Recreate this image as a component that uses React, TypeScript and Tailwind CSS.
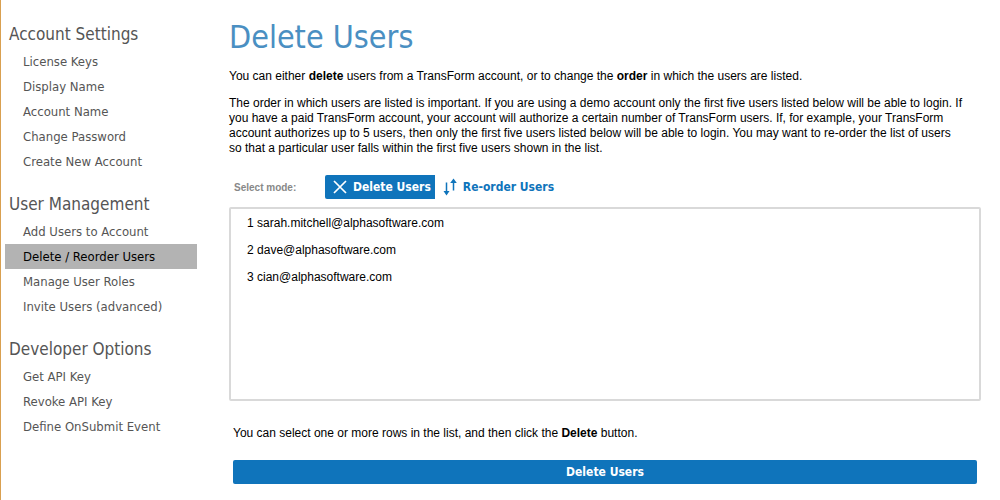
import { useState } from "react";

const menu = [
  {
    title: "Account Settings",
    items: ["License Keys", "Display Name", "Account Name", "Change Password", "Create New Account"],
  },
  {
    title: "User Management",
    items: ["Add Users to Account", "Delete / Reorder Users", "Manage User Roles", "Invite Users (advanced)"],
  },
  {
    title: "Developer Options",
    items: ["Get API Key", "Revoke API Key", "Define OnSubmit Event"],
  },
];

const users = ["sarah.mitchell@alphasoftware.com", "dave@alphasoftware.com", "cian@alphasoftware.com"];

const humanist = "font-['DejaVu_Sans_Condensed','DejaVu_Sans',sans-serif]";

function CrossIcon() {
  return (
    <svg width="14" height="14" viewBox="0 0 14 14" aria-hidden="true">
      <path d="M1 1L13 13M13 1L1 13" stroke="currentColor" strokeWidth="1.7" fill="none" />
    </svg>
  );
}

function ReorderIcon() {
  return (
    <svg width="14" height="18" viewBox="0 0 14 18" aria-hidden="true">
      <path d="M3.5 4.5V14M10.5 12.5V3" stroke="currentColor" strokeWidth="1.5" fill="none" />
      <path d="M0.5 13H6.5L3.5 17.6ZM7.2 5L10.5 0.4L13.8 5Z" fill="currentColor" />
    </svg>
  );
}

function Sidebar() {
  return (
    <nav className={`w-[196px] shrink-0 pt-1 pl-1 text-[#555] ${humanist}`}>
      {menu.map((group) => (
        <section key={group.title}>
          <h2 className="pt-[17px] pb-[2px] pl-1 text-[17px] leading-[26px]">{group.title}</h2>
          <ul>
            {group.items.map((item) => {
              const current = item === "Delete / Reorder Users";
              return (
                <li key={item}>
                  <a
                    href="#"
                    aria-current={current ? "page" : undefined}
                    className={`block pl-[18px] text-[13px] leading-[25px] ${current ? "bg-[#b3b3b3] text-black" : ""}`}
                  >
                    {item}
                  </a>
                </li>
              );
            })}
          </ul>
        </section>
      ))}
    </nav>
  );
}

export default function App() {
  const [mode, setMode] = useState("delete");
  const [selected, setSelected] = useState<number[]>([]);

  const toggle = (i: number) =>
    setSelected((prev) => (prev.includes(i) ? prev.filter((n) => n !== i) : [...prev, i]));

  const modeClass = (active: boolean) =>
    `flex h-6 items-center gap-[6px] rounded-l-[2px] pr-1 pl-2 text-[12px] font-bold ${humanist} ${
      active ? "bg-[#0f74bb] text-white" : "text-[#0f74bb]"
    }`;

  return (
    <div className="flex min-h-screen border-l border-[#d9a050] bg-white font-['Liberation_Sans',Arial,sans-serif] text-[12px] leading-[15px] text-black">
      <Sidebar />
      <main className="min-w-0 flex-1 pt-4 pr-[19px] pb-4 pl-8">
        <h1 className={`text-[32px] leading-[42px] text-[#4a8fc2] ${humanist}`}>Delete Users</h1>
        <p className="mt-[11px]">
          You can either <b>delete</b> users from a TransForm account, or to change the <b>order</b> in which the users
          are listed.
        </p>
        <p className="mt-3 pr-4">
          The order in which users are listed is important. If you are using a demo account only the first five users
          listed below will be able to login. If you have a paid TransForm account, your account will authorize a
          certain number of TransForm users. If, for example, your TransForm account authorizes up to 5 users, then
          only the first five users listed below will be able to login. You may want to re-order the list of users so
          that a particular user falls within the first five users shown in the list.
        </p>

        <div className="mt-[19px] flex items-center pl-[5px]" role="group" aria-labelledby="mode-label">
          <span id="mode-label" className="w-[91px] text-[10px] font-bold text-[#888]">
            Select mode:
          </span>
          <button type="button" className={modeClass(mode === "delete")} onClick={() => setMode("delete")}>
            <CrossIcon />
            Delete Users
          </button>
          <button type="button" className={modeClass(mode === "reorder")} onClick={() => setMode("reorder")}>
            <ReorderIcon />
            Re-order Users
          </button>
        </div>

        <ul className="mt-2 min-h-[194px] rounded-[2px] border-2 border-[#d9d9d9] pt-px">
          {users.map((user, i) => (
            <li key={user}>
              <button
                type="button"
                aria-pressed={selected.includes(i)}
                onClick={() => toggle(i)}
                className={`block w-full px-4 py-[6px] text-left ${selected.includes(i) ? "bg-[#cfe4f4]" : ""}`}
              >
                {i + 1} {user}
              </button>
            </li>
          ))}
        </ul>

        <div className="mt-[25px] px-1">
          <p>
            You can select one or more rows in the list, and then click the <b>Delete</b> button.
          </p>
          <button
            type="button"
            className={`mt-[19px] h-6 w-full rounded-[2px] bg-[#0f74bb] text-[12px] font-bold text-white ${humanist}`}
          >
            Delete Users
          </button>
        </div>
      </main>
    </div>
  );
}
